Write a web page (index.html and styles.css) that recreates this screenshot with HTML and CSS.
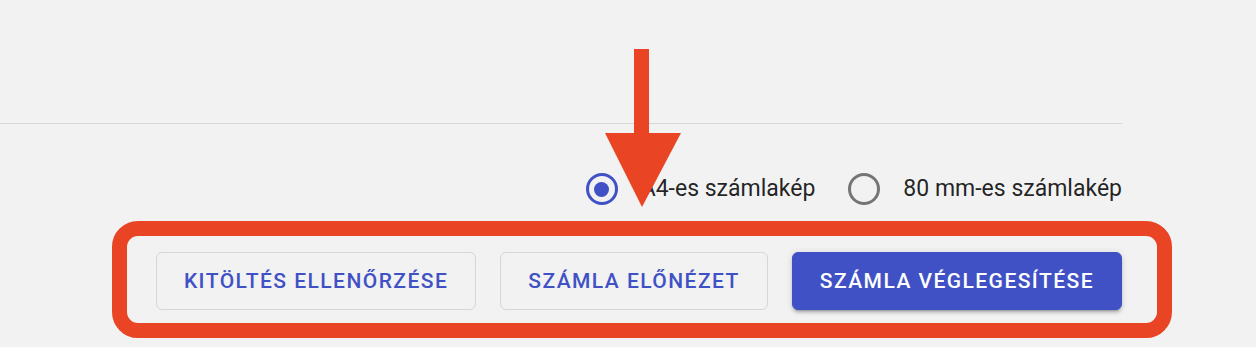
FILE: index.html
```html
<!DOCTYPE html>
<html lang="hu">
<head>
  <meta charset="UTF-8">
  <meta name="viewport" content="width=device-width, initial-scale=1.0">
  <title>Számla véglegesítése</title>
  <link rel="stylesheet" href="styles.css">
</head>
<body>
  <div class="page">
    <div class="top"></div>

    <div class="formats">
      <label class="radio-item">
        <span class="radio checked"><span class="dot"></span></span>
        <span class="radio-label">A4-es számlakép</span>
      </label>
      <label class="radio-item">
        <span class="radio"></span>
        <span class="radio-label">80 mm-es számlakép</span>
      </label>
    </div>

    <div class="actions">
      <button class="btn">Kitöltés ellenőrzése</button>
      <button class="btn">Számla előnézet</button>
      <button class="btn primary">Számla véglegesítése</button>
      <!-- annotation frame round the buttons -->
      <div class="highlight"></div>
    </div>

    <!-- annotation arrow -->
    <svg class="arrow" width="76" height="160" viewBox="0 0 76 160" xmlns="http://www.w3.org/2000/svg">
      <rect x="29" y="0" width="15" height="86" fill="#e94423"></rect>
      <polygon points="0,84 76,84 37,158" fill="#e94423"></polygon>
    </svg>
  </div>
</body>
</html>
```

FILE: styles.css
```css
body {
  margin: 0;
  background-color: #f2f2f2;
  font-family: Roboto, "Noto Sans", sans-serif;
  color: rgba(0, 0, 0, 0.87);
}

.page {
  position: relative;
  width: 1122px;
  height: 347px;
}

.top {
  height: 123px;
  border-bottom: 1px solid #d6d6d6;
}

.formats {
  display: flex;
  justify-content: flex-end;
  align-items: center;
  gap: 33px;
  height: 32px;
  margin-top: 49px;
}

.radio-item {
  display: flex;
  align-items: center;
  gap: 23px;
}

.radio {
  box-sizing: border-box;
  width: 32px;
  height: 32px;
  border: 3px solid #757575;
  border-radius: 50%;
  display: flex;
  align-items: center;
  justify-content: center;
}

.radio.checked {
  border-color: #3f51c5;
}

.dot {
  width: 15px;
  height: 15px;
  border-radius: 50%;
  background-color: #3f51c5;
}

.radio-label {
  font-size: 23px;
  line-height: 32px;
}

.actions {
  position: relative;
  display: flex;
  justify-content: flex-end;
  gap: 24px;
  margin-top: 47px;
}

.btn {
  box-sizing: border-box;
  height: 58px;
  padding: 0 27px;
  border: 1.5px solid #d6d6d6;
  border-radius: 6px;
  background-color: transparent;
  color: #3f51c5;
  font-family: Roboto, "Noto Sans", sans-serif;
  font-size: 21px;
  font-weight: 500;
  letter-spacing: 1.45px;
  text-transform: uppercase;
}

.btn.primary {
  border-color: #3f51c5;
  background-color: #3f51c5;
  color: #fff;
  box-shadow: 0 4px 2px -3px rgba(0, 0, 0, 0.2), 0 3px 3px 0 rgba(0, 0, 0, 0.14), 0 1px 7px 0 rgba(0, 0, 0, 0.12);
}

.highlight {
  position: absolute;
  left: 112px;
  top: -31px;
  width: 1060px;
  height: 117px;
  box-sizing: border-box;
  border: 15px solid #e94423;
  border-radius: 26px;
  pointer-events: none;
}

.arrow {
  position: absolute;
  left: 605px;
  top: 49px;
}
```
